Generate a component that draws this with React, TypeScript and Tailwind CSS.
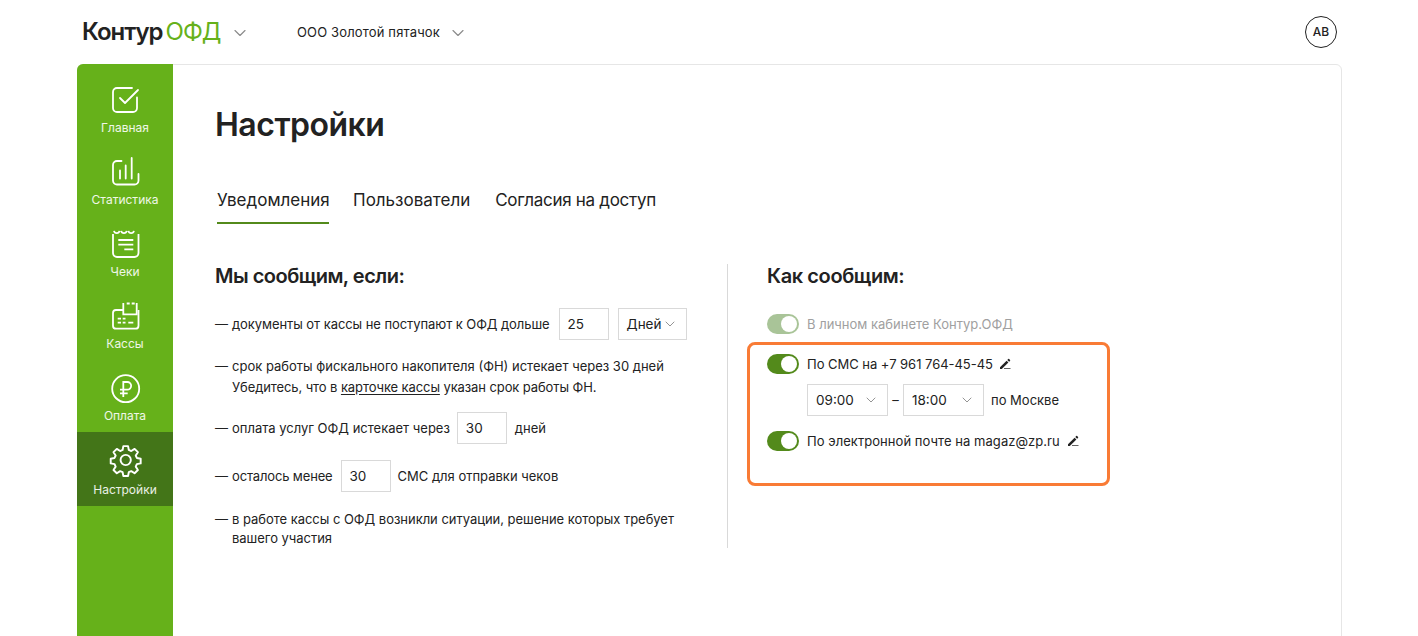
import { ChevronDown } from 'lucide-react';
import type { ReactNode } from 'react';

const navIcon = 'w-[30px] h-[30px] fill-none stroke-white stroke-[1.8] overflow-visible';

const navItems: { label: string; active?: boolean; icon: ReactNode }[] = [
  {
    label: 'Главная',
    icon: (
      <svg viewBox="0 0 30 30" className={navIcon}>
        <path d="M22 3H7a4 4 0 0 0-4 4v16a4 4 0 0 0 4 4h16a4 4 0 0 0 4-4V12.500" strokeLinecap="round" />
        <path d="M10 13l5 5L28 5" strokeLinecap="round" strokeLinejoin="round" />
      </svg>
    ),
  },
  {
    label: 'Статистика',
    icon: (
      <svg viewBox="0 0 30 30" className={navIcon}>
        <path d="M11.500 4H7a4 4 0 0 0-4 4v15.500a4 4 0 0 0 4 4h17.500a4 4 0 0 0 4-4V17" strokeLinecap="round" />
        <path d="M10 21.500v-8M15.700 21.500V8.500M21.700 21.500V1" strokeLinecap="round" />
      </svg>
    ),
  },
  {
    label: 'Чеки',
    icon: (
      <svg viewBox="0 0 30 30" className={navIcon}>
        <path d="M3 5v19a4 4 0 0 0 4 4h17.500a4 4 0 0 0 4-4V5" />
        <path d="M4 1.800a2.800 2.800 0 0 0 5.500 0M11.200 1.800a2.800 2.800 0 0 0 5.500 0M18.400 1.800a2.800 2.800 0 0 0 5.500 0" />
        <path d="M8.300 11h15M8.300 15.700h15M14.300 20.300h9" />
      </svg>
    ),
  },
  {
    label: 'Кассы',
    icon: (
      <svg viewBox="0 0 30 30" className={navIcon}>
        <path d="M13.300 9H6a3 3 0 0 0-3 3v12.700a3 3 0 0 0 3 3h19.500a3 3 0 0 0 3-3V9" />
        <path d="M13.300 2v11.300h13.400V2" />
        <path d="M16.700 2.500h3M21.700 2.500h3" />
        <path d="M7.700 17.700h3.300M12.700 17.700h2.800M7.700 21.700h3.300M12.700 21.700h2.800M18.300 21.700h5" />
      </svg>
    ),
  },
  {
    label: 'Оплата',
    icon: (
      <svg viewBox="0 0 30 30" className={navIcon}>
        <circle cx="15.700" cy="15.700" r="13.500" />
        <path d="M13.300 24V9h4a3.800 3.800 0 0 1 0 7.700H10M10 20.300h7.700" />
      </svg>
    ),
  },
  {
    label: 'Настройки',
    active: true,
    icon: (
      <svg viewBox="0 0 30 30" className={navIcon}>
        <g transform="translate(15.700 15) scale(1.070) translate(-15 -15)">
          <circle cx="15" cy="15" r="4.800" />
          <path
            d="M12.800 2h4.400l.7 3.600 2.300 1 3.100-2 3.100 3.100-2 3.100 1 2.300 3.600.7v4.400l-3.600.7-1 2.300 2 3.100-3.100 3.100-3.100-2-2.300 1-.7 3.600h-4.400l-.7-3.600-2.300-1-3.100 2-3.100-3.100 2-3.100-1-2.300-3.600-.7v-4.400l3.600-.7 1-2.300-2-3.100 3.100-3.100 3.100 2 2.300-1z"
            strokeLinejoin="round"
          />
        </g>
      </svg>
    ),
  },
];

function Toggle({ muted }: { muted?: boolean }) {
  return (
    <div className={`w-8 h-5 rounded-full flex justify-end items-center shrink-0 ${muted ? 'bg-[#a9c498]' : 'bg-[#538a1b]'}`}>
      <div className="w-5 h-5 rounded-full bg-white border-2 border-transparent [background-clip:padding-box]" />
    </div>
  );
}

function Box({ children, w }: { children: ReactNode; w: string }) {
  return (
    <div className={`h-8 border border-[#d9d9d9] flex items-center justify-between pl-2 pr-2 text-[13.500px] text-[#222] shrink-0 ${w}`}>
      {children}
    </div>
  );
}

function Row({ children, className = '' }: { children: ReactNode; className?: string }) {
  return (
    <div className={`flex text-[13px] text-[#222] ${className}`}>
      <span className="w-[17px] shrink-0">—</span>
      <div className="flex-1">{children}</div>
    </div>
  );
}

function Caret() {
  return <ChevronDown size={16} strokeWidth={1.4} className="text-[#8c8c8c]" />;
}

function Pen({ className = '' }: { className?: string }) {
  return (
    <svg viewBox="0 0 12 12" className={`w-3 h-3 fill-[#222] shrink-0 ${className}`}>
      <path d="M1 9.300L7.600 2.700l1.800 1.800-6.600 6.500H1z" />
      <path d="M8.300 2l.9-.9a.7.7 0 0 1 1 0l.8.8a.7.7 0 0 1 0 1l-.9.9z" />
      <path d="M5 10.300h6.500V11H5z" />
    </svg>
  );
}

export default function App() {
  return (
    <div className="w-[1418px] h-[636px] overflow-hidden bg-white text-[#222] font-['Inter',sans-serif]">
      {/* Шапка */}
      <header className="h-16 flex items-center pl-[82px] pr-[81px]">
        <div className="text-[24px] leading-none font-semibold tracking-[-1px] -mt-[1px] w-[151px]">
          Контур<span className="text-[#66b11a] font-normal ml-[3px]">ОФД</span>
        </div>
        <ChevronDown size={20} strokeWidth={1.4} className="text-[#8c8c8c] -ml-[3px] mt-[1px]" />
        <div className="ml-[47px] mt-[1px] text-[13px] tracking-[0.15px] text-[#222]">ООО Золотой пятачок</div>
        <ChevronDown size={20} strokeWidth={1.4} className="text-[#8c8c8c] ml-[8px] mt-[1px]" />
        <div className="ml-auto w-8 h-8 rounded-full border-[1.500px] border-[#222] flex items-center justify-center text-[12px] font-medium">
          AB
        </div>
      </header>

      {/* Карточка */}
      <div className="ml-[77px] w-[1265px] h-[600px] border border-[#e6e6e6] rounded-t-md flex">
        <nav className="w-[96px] shrink-0 bg-[#66b11a] rounded-tl-md flex flex-col text-white -ml-[1px] -mt-[1px] pt-2">
          {navItems.map(item => (
            <div
              key={item.label}
              className={`flex flex-col items-center pt-[13px] ${item.active ? 'bg-[#437518] h-[74px]' : 'h-[72px]'}`}
            >
              {item.icon}
              <span className={`text-[12px] leading-4 text-white/90 ${item.active ? 'mt-[7px]' : 'mt-[5px]'}`}>{item.label}</span>
            </div>
          ))}
        </nav>

        <main className="flex-1 pl-[42px]">
          <h1 className="text-[32px] leading-10 font-semibold mt-[40px] tracking-[-0.5px]">Настройки</h1>

          <div className="flex mt-[43px] text-[17px] leading-6 pl-[2px]">
            <div className="w-[112px] h-[36px] border-b-[2px] border-[#538a1b]">Уведомления</div>
            <div className="ml-[24px]">Пользователи</div>
            <div className="ml-[25px] tracking-[-0.3px]">Согласия на доступ</div>
          </div>

          <div className="flex mt-[40px]">
            <section className="w-[513px] h-[284px] border-r border-[#d9d9d9] shrink-0">
              <h2 className="text-[20px] leading-6 font-semibold tracking-[-0.5px]">Мы сообщим, если:</h2>

              <Row className="mt-[20px] items-center leading-5">
                <div className="flex items-center">
                  <span className="tracking-[-0.07px]">документы от кассы не поступают к ОФД дольше</span>
                  <div className="ml-[9px]"><Box w="w-[50px]">25</Box></div>
                  <div className="ml-[9px]">
                    <Box w="w-[69px]">
                      Дней
                      <Caret />
                    </Box>
                  </div>
                </div>
              </Row>

              <Row className="mt-[16px] leading-[21px]">
                срок работы фискального накопителя (ФН) истекает через 30 дней
                <br />
                <span className="tracking-[-0.1px]">
                  Убедитесь, что в <span className="underline underline-offset-2">карточке кассы</span> указан срок работы ФН.
                </span>
              </Row>

              <Row className="mt-[14px] items-center leading-5">
                <div className="flex items-center">
                  <span>оплата услуг ОФД истекает через</span>
                  <div className="ml-[7px]"><Box w="w-[50px]">30</Box></div>
                  <span className="ml-[8px]">дней</span>
                </div>
              </Row>

              <Row className="mt-[16px] items-center leading-5">
                <div className="flex items-center">
                  <span className="tracking-[-0.15px]">осталось менее</span>
                  <div className="ml-[8px]"><Box w="w-[50px]">30</Box></div>
                  <span className="ml-[7px]">СМС для отправки чеков</span>
                </div>
              </Row>

              <Row className="mt-[18px] w-[470px] leading-[19px] tracking-[-0.03px]">
                в работе кассы с ОФД возникли ситуации, решение которых требует вашего участия
              </Row>
            </section>

            <section className="pl-[39px] flex-1">
              <h2 className="text-[20px] leading-6 font-semibold tracking-[-0.4px]">Как сообщим:</h2>

              <div className="flex items-center gap-[8px] mt-[26px] text-[13px] leading-5 text-[#a0a0a0]">
                <Toggle muted />
                <span>В личном кабинете Контур.ОФД</span>
              </div>

              <div className="-ml-[20px] mt-[8px] w-[363px] h-[144px] border-[3px] border-[#f97b35] rounded-[8px] pl-[17px] pt-[9px] text-[13px] leading-5">
                <div className="flex items-center gap-[8px]">
                  <Toggle />
                  <span className="tracking-[-0.03px]">По СМС на +7 961 764-45-45</span>
                  <Pen className="-ml-[2px]" />
                </div>
                <div className="flex items-center mt-[10px] ml-[40px]">
                  <Box w="w-[81px]">
                    09:00
                    <Caret />
                  </Box>
                  <span className="w-[15px] text-center">–</span>
                  <Box w="w-[81px]">
                    18:00
                    <Caret />
                  </Box>
                  <span className="ml-[7px]">по Москве</span>
                </div>
                <div className="flex items-center gap-[8px] mt-[15px]">
                  <Toggle />
                  <span className="tracking-[0.05px]">По электронной почте на magaz@zp.ru</span>
                  <Pen className="-ml-[1px]" />
                </div>
              </div>
            </section>
          </div>
        </main>
      </div>
    </div>
  );
}
